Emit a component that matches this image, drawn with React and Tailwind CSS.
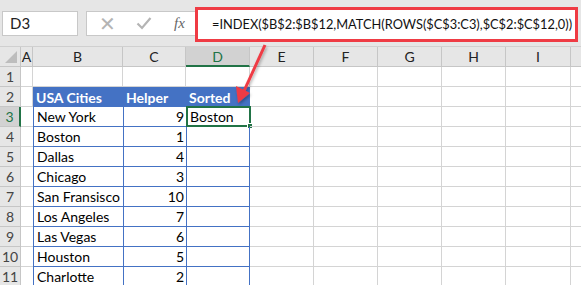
import React from 'react';

const cols = [
  { id: 'A', w: 'w-[12px]' },
  { id: 'B', w: 'w-[90px]' },
  { id: 'C', w: 'w-[63px]' },
  { id: 'D', w: 'w-[64px]' },
  { id: 'E', w: 'w-[64px]' },
  { id: 'F', w: 'w-[64px]' },
  { id: 'G', w: 'w-[64px]' },
  { id: 'H', w: 'w-[64px]' },
  { id: 'I', w: 'w-[65px]' },
  { id: '', w: 'w-[20px]' },
];

const rows = [
  ['New York', 9, 'Boston'],
  ['Boston', 1, ''],
  ['Dallas', 4, ''],
  ['Chicago', 3, ''],
  ['San Fransisco', 10, ''],
  ['Los Angeles', 7, ''],
  ['Las Vegas', 6, ''],
  ['Houston', 5, ''],
  ['Charlotte', 2, ''],
];

function Grid({ w, className = '', children }) {
  return (
    <div className={`${w} shrink-0 h-[20px] border-r border-b border-[#d4d4d4] relative ${className}`}>
      {children}
    </div>
  );
}

export default function App() {
  return (
    <div className="w-[581px] h-[285px] overflow-hidden bg-white relative font-['Lato',sans-serif] text-[14px] text-black">
      {/* Formula bar */}
      <div className="h-[47px] bg-[#e6e6e6] flex items-center pl-[2px] border-b border-[#d0d0d0]">
        <div className="w-[76px] shrink-0 h-[25px] bg-white border border-[#c8c8c8] flex items-center pl-[7px] text-[15px] text-[#222]">
          D3
        </div>
        <div className="w-[110px] shrink-0 ml-[8px] h-[25px] bg-white border border-[#c8c8c8] flex items-center">
          <span className="ml-[12px] text-[#b4b4b4] text-[20px] leading-none">✕</span>
          <svg className="ml-[20px]" width="16" height="14" viewBox="0 0 16 14">
            <path d="M1.5 7.5 L6 12 L14.5 2" fill="none" stroke="#b4b4b4" strokeWidth="2.2" />
          </svg>
          <span className="ml-[22px] text-[#666] italic text-[15px] font-['Liberation_Serif',serif]">fx</span>
        </div>
        <div className="w-[383px] shrink-0 -ml-[1px] mt-[3px] h-[35px] bg-white border-[3px] border-[#ef3b44] flex items-center pl-[14px] text-[12.8px] text-[#111] whitespace-nowrap overflow-hidden">
          =INDEX($B$2:$B$12,MATCH(ROWS($C$3:C3),$C$2:$C$12,0))
        </div>
      </div>

      {/* Column headers */}
      <div className="flex h-[20px]">
        <div className="w-[21px] shrink-0 bg-[#e6e6e6] border-r border-b border-[#c6c6c6] relative">
          <svg className="absolute right-[3px] bottom-[3px]" width="12" height="12" viewBox="0 0 12 12">
            <path d="M12 0 L12 12 L0 12 Z" fill="#bdbdbd" />
          </svg>
        </div>
        {cols.map((c, i) => (
          <div
            key={i}
            className={`${c.w} shrink-0 h-[20px] flex items-center justify-center border-r border-[#c6c6c6] text-[14px] ${
              c.id === 'D'
                ? 'bg-[#d2d2d2] text-[#217346] border-b-2 border-b-[#217346]'
                : 'bg-[#e6e6e6] text-[#222] border-b border-b-[#c6c6c6]'
            }`}
          >
            {c.id}
          </div>
        ))}
      </div>

      {/* Row 1 */}
      <div className="flex">
        <div className="w-[21px] shrink-0 h-[20px] bg-[#e6e6e6] border-r border-b border-[#c6c6c6] flex items-center justify-center text-[#444]">1</div>
        {cols.map((c, i) => (
          <Grid key={i} w={c.w} />
        ))}
      </div>

      {/* Row 2 header */}
      <div className="flex">
        <div className="w-[21px] shrink-0 h-[20px] bg-[#e6e6e6] border-r border-b border-[#c6c6c6] flex items-center justify-center text-[#444]">2</div>
        <Grid w="w-[12px]" />
        <div className="w-[90px] shrink-0 h-[20px] bg-[#4472c4] text-white font-bold flex items-center pl-[3px]">USA Cities</div>
        <div className="w-[63px] shrink-0 h-[20px] bg-[#4472c4] text-white font-bold flex items-center pl-[3px]">Helper</div>
        <div className="w-[64px] shrink-0 h-[20px] bg-[#4472c4] text-white font-bold flex items-center pl-[3px]">Sorted</div>
        {cols.slice(4).map((c, i) => (
          <Grid key={i} w={c.w} />
        ))}
      </div>

      {/* Data rows */}
      {rows.map((r, i) => {
        const n = i + 3;
        const sel = n === 3;
        return (
          <div key={n} className="flex">
            <div
              className={`w-[21px] shrink-0 h-[20px] flex items-center justify-center border-b border-[#c6c6c6] ${
                sel
                  ? 'bg-[#d2d2d2] text-[#217346] border-r-2 border-r-[#217346]'
                  : 'bg-[#e6e6e6] text-[#444] border-r border-r-[#c6c6c6]'
              }`}
            >
              {n}
            </div>
            <Grid w="w-[12px]" className="border-r-0" />
            <div className="w-[90px] shrink-0 h-[20px] border-l border-b border-[#4472c4] flex items-center pl-[3px] whitespace-nowrap">
              {r[0]}
            </div>
            <div className="w-[63px] shrink-0 h-[20px] border-l border-b border-[#4472c4] flex items-center justify-end pr-[2px]">
              {r[1]}
            </div>
            <div className="w-[64px] shrink-0 h-[20px] border-l border-r border-b border-[#4472c4] flex items-center pl-[3px] relative">
              {r[2]}
              {sel && (
                <div className="absolute -left-[1px] -top-[1px] w-[65px] h-[21px] border-2 border-[#217346]">
                  <div className="absolute -right-[4px] -bottom-[4px] w-[6px] h-[6px] bg-[#217346] border border-white" />
                </div>
              )}
            </div>
            {cols.slice(4).map((c, j) => (
              <Grid key={j} w={c.w} />
            ))}
          </div>
        );
      })}

      {/* Red arrow */}
      <svg className="absolute left-0 top-0 pointer-events-none" width="581" height="285">
        <defs>
          <filter id="sh" x="-50%" y="-50%" width="200%" height="200%">
            <feDropShadow dx="1" dy="2" stdDeviation="1.5" floodColor="#000" floodOpacity="0.3" />
          </filter>
        </defs>
        <g filter="url(#sh)">
          <line x1="265" y1="45" x2="244" y2="91" stroke="#ef3b44" strokeWidth="3" />
          <path d="M238 103 L236 86 L250 93 Z" fill="#ef3b44" />
        </g>
      </svg>
    </div>
  );
}
